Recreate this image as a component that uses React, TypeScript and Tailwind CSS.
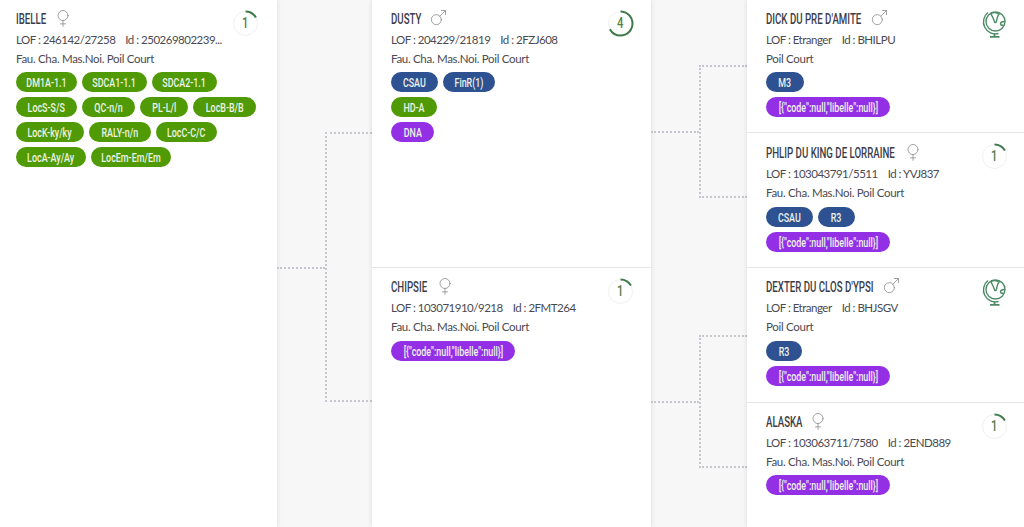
import { Mars, Venus } from "lucide-react";

type Tag = { label: string; color: "green" | "blue" | "purple"; width: string };

interface Dog {
  name: string;
  nameWidth: string;
  sex: "m" | "f";
  lof: string;
  id: string;
  traits: string;
  tags: Tag[][];
  score?: number;
}

const NULL_TAG: Tag = { label: '[{"code":null,"libelle":null}]', color: "purple", width: "w-[124px]" };

const g = (label: string, width: string): Tag => ({ label, color: "green", width });
const b = (label: string, width: string): Tag => ({ label, color: "blue", width });

const TRAITS = "Fau. Cha. Mas.Noi. Poil Court";

const ibelle: Dog = {
  name: "IBELLE",
  nameWidth: "w-[30px]",
  sex: "f",
  lof: "246142/27258",
  id: "250269802239...",
  traits: TRAITS,
  score: 1,
  tags: [
    [g("DM1A-1.1", "w-[61px]"), g("SDCA1-1.1", "w-[65px]"), g("SDCA2-1.1", "w-[65px]")],
    [g("LocS-S/S", "w-[61px]"), g("QC-n/n", "w-[53px]"), g("PL-L/l", "w-[48px]"), g("LocB-B/B", "w-[63px]")],
    [g("LocK-ky/ky", "w-[68px]"), g("RALY-n/n", "w-[62px]"), g("LocC-C/C", "w-[61px]")],
    [g("LocA-Ay/Ay", "w-[70px]"), g("LocEm-Em/Em", "w-[80px]")],
  ],
};

const dusty: Dog = {
  name: "DUSTY",
  nameWidth: "w-[30px]",
  sex: "m",
  lof: "204229/21819",
  id: "2FZJ608",
  traits: TRAITS,
  score: 4,
  tags: [
    [b("CSAU", "w-[47px]"), b("FinR(1)", "w-[52px]")],
    [g("HD-A", "w-[46px]")],
    [{ label: "DNA", color: "purple", width: "w-[43px]" }],
  ],
};

const chipsie: Dog = {
  name: "CHIPSIE",
  nameWidth: "w-[37px]",
  sex: "f",
  lof: "103071910/9218",
  id: "2FMT264",
  traits: TRAITS,
  score: 1,
  tags: [[NULL_TAG]],
};

const dick: Dog = {
  name: "DICK DU PRE D'AMITE",
  nameWidth: "w-[96px]",
  sex: "m",
  lof: "Etranger",
  id: "BHILPU",
  traits: "Poil Court",
  tags: [[b("M3", "w-[38px]")], [NULL_TAG]],
};

const philip: Dog = {
  name: "PHLIP DU KING DE LORRAINE",
  nameWidth: "w-[130px]",
  sex: "f",
  lof: "103043791/5511",
  id: "YVJ837",
  traits: TRAITS,
  score: 1,
  tags: [[b("CSAU", "w-[47px]"), b("R3", "w-[37px]")], [NULL_TAG]],
};

const dexter: Dog = {
  name: "DEXTER DU CLOS D'YPSI",
  nameWidth: "w-[108px]",
  sex: "m",
  lof: "Etranger",
  id: "BHJSGV",
  traits: "Poil Court",
  tags: [[b("R3", "w-[36px]")], [NULL_TAG]],
};

const alaska: Dog = {
  name: "ALASKA",
  nameWidth: "w-[35px]",
  sex: "f",
  lof: "103063711/7580",
  id: "2END889",
  traits: TRAITS,
  score: 1,
  tags: [[NULL_TAG]],
};

const tagColors = {
  green: "bg-[#4f9a05]",
  blue: "bg-[#2d5191]",
  purple: "bg-[#9330e6]",
};

function Pill({ tag }: { tag: Tag }) {
  return (
    <span
      className={`flex h-5 items-center justify-center rounded-[10px] font-['Roboto',sans-serif] text-[13.5px] font-medium text-[#eef3ea] ${tag.width} ${tagColors[tag.color]}`}
    >
      <span className="scale-x-[0.66] whitespace-nowrap">{tag.label}</span>
    </span>
  );
}

function ScoreBadge({ value }: { value: number }) {
  const r = 12;
  const len = 2 * Math.PI * r;
  return (
    <div className="relative h-[27px] w-[27px]">
      <svg viewBox="0 0 27 27" className="h-[27px] w-[27px] -rotate-90">
        <circle cx="13.5" cy="13.5" r={r} fill="none" stroke="#f0f0f0" strokeWidth="1" />
        <circle
          cx="13.5"
          cy="13.5"
          r={r}
          fill="none"
          stroke="#3f7a4c"
          strokeWidth="2"
          strokeDasharray={`${(len * value) / 6} ${len}`}
        />
      </svg>
      <span className="absolute inset-0 flex items-center justify-center font-['Roboto',sans-serif] text-[15px] font-medium text-[#55804f]">
        <span className="scale-x-75">{value}</span>
      </span>
    </div>
  );
}

function GlobeIcon() {
  return (
    <svg viewBox="0 0 24 28" className="h-[28px] w-6" fill="none" stroke="#4d8a66" strokeWidth="1.4">
      <path d="M6 2.5a12 12 0 0 0 10.5 21" />
      <circle cx="13.5" cy="11.5" r="9.5" />
      <path d="M9 3.2c1 3.5 2.5 5 3.5 8.5.4 1.5 1.6 1 2-.5.5-2 .5-5 2.5-7-2-1.5-6-2.5-8-1zM22.5 11.5c-2 0-4 1-4 2.5s2 1.5 3 1" />
      <path d="M12.5 23.5v2.6M8 26.8h9.5" strokeWidth="1.8" />
    </svg>
  );
}

function Card({
  dog,
  className,
  aside,
  tagsGap = "mt-1",
}: {
  dog: Dog;
  className: string;
  aside: string;
  tagsGap?: string;
}) {
  const Sex = dog.sex === "m" ? Mars : Venus;
  return (
    <div className={`relative bg-white pt-[9px] ${className}`}>
      <div className="flex h-[20px] items-center gap-[7px]">
        <span className={`font-['Roboto',sans-serif] text-[15px] font-medium leading-5 text-[#3c3c48] ${dog.nameWidth}`}>
          <span className="inline-block origin-left scale-x-[0.645] whitespace-nowrap">{dog.name}</span>
        </span>
        <Sex size={20} strokeWidth={1} color="#8d8f92" className="-mt-[3px]" />
      </div>
      <div className="mt-[1px] flex h-[19px] gap-[10px] whitespace-nowrap text-[11.5px] leading-[19px] tracking-[-0.5px] text-[#4a4a52]">
        <span>LOF : {dog.lof}</span>
        <span>Id : {dog.id}</span>
      </div>
      <div className="h-[19px] text-[11.5px] leading-[19px] tracking-[-0.3px] text-[#4a4a52]">{dog.traits}</div>
      <div className={`flex flex-col gap-[5px] ${tagsGap}`}>
        {dog.tags.map((row, i) => (
          <div key={i} className="flex gap-[5px]">
            {row.map((tag) => (
              <Pill key={tag.label} tag={tag} />
            ))}
          </div>
        ))}
      </div>
      <div className={`absolute top-[10px] ${aside}`}>
        {dog.score ? <ScoreBadge value={dog.score} /> : <GlobeIcon />}
      </div>
    </div>
  );
}

// one bracket between a parent row and its two ancestors
function Connector({
  top,
  mid,
  bottom,
  className,
}: {
  top: number;
  mid: number;
  bottom: number;
  className: string;
}) {
  return (
    <div className={`flex ${className}`}>
      <div className="w-12">
        <div style={{ height: mid }} className="border-b-2 border-dotted border-[#c6c6ce]" />
      </div>
      <div className="flex-1">
        <div style={{ height: top }} />
        <div
          style={{ height: bottom - top }}
          className="border-y-2 border-l-2 border-dotted border-[#c6c6ce]"
        />
      </div>
    </div>
  );
}

export default function App() {
  return (
    <div className="flex h-screen overflow-hidden bg-[#f7f7f7] font-['Lato','Noto_Sans',sans-serif]">
      <div className="w-[277px] shrink-0 bg-white shadow-[0_0_5px_rgba(0,0,0,0.12)]">
        <Card dog={ibelle} className="h-full pl-4" aside="right-[18px]" />
      </div>

      <div className="flex-1">
        <Connector top={132} mid={269} bottom={402} className="h-full" />
      </div>

      <div className="flex w-[279px] shrink-0 flex-col bg-white shadow-[0_0_5px_rgba(0,0,0,0.12)]">
        <Card dog={dusty} className="h-[268px] border-b border-[#e6e6e6] pl-[19px]" aside="right-[17px]" />
        <Card dog={chipsie} className="flex-1 pl-[19px]" aside="right-[17px]" tagsGap="mt-[5px]" />
      </div>

      <div className="flex w-[96px] shrink-0 flex-col">
        <Connector top={65} mid={133} bottom={198} className="h-[268px]" />
        <Connector top={67} mid={135} bottom={200} className="flex-1" />
      </div>

      <div className="flex w-[277px] shrink-0 flex-col bg-white shadow-[0_0_5px_rgba(0,0,0,0.12)]">
        <Card dog={dick} className="h-[133px] border-b border-[#e6e6e6] pl-[19px]" aside="right-[18px]" />
        <Card
          dog={philip}
          className="h-[135px] border-b border-[#e6e6e6] pl-[19px] pt-[10px]"
          aside="right-[16px]"
          tagsGap="mt-[5px]"
        />
        <Card
          dog={dexter}
          className="h-[135px] border-b border-[#e6e6e6] pl-[19px]"
          aside="right-[18px]"
          tagsGap="mt-[5px]"
        />
        <Card dog={alaska} className="flex-1 pl-[19px]" aside="right-[16px]" />
      </div>
    </div>
  );
}
